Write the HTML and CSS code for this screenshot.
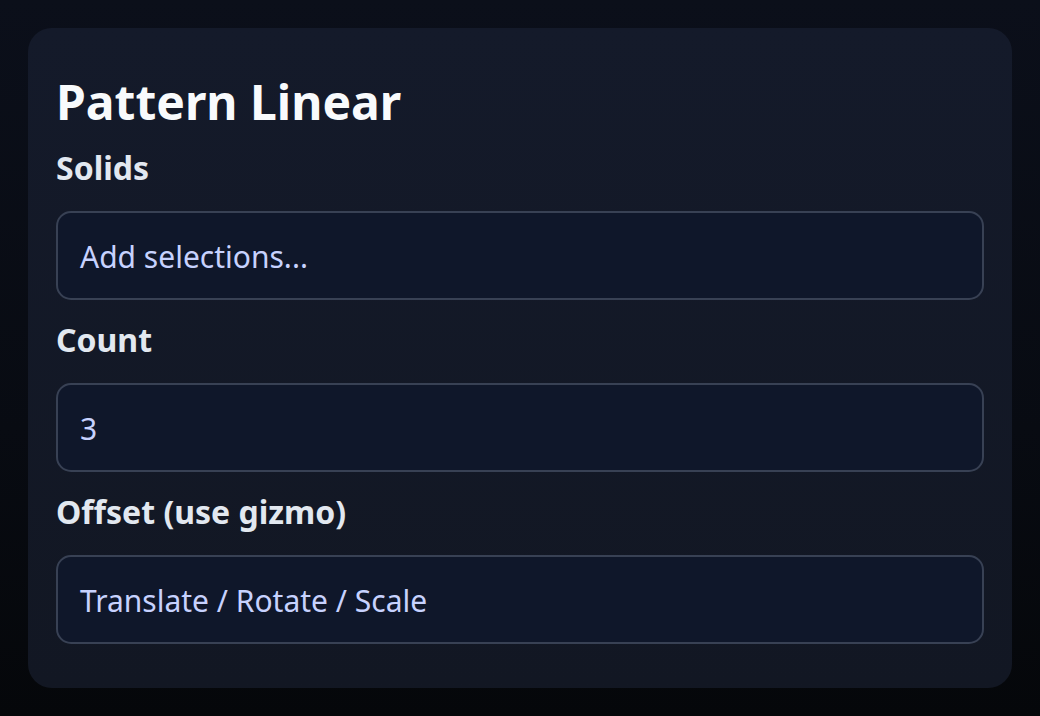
FILE: index.html
```html
<!DOCTYPE html>
<html lang="en">
<head>
<meta charset="utf-8">
<title>Pattern Linear</title>
<link rel="stylesheet" href="styles.css">
</head>
<body>
<main class="card">
  <h1 class="title">Pattern Linear</h1>
  <div class="fields">
    <div class="field">
      <label class="label">Solids</label>
      <div class="input">Add selections...</div>
    </div>
    <div class="field">
      <label class="label">Count</label>
      <div class="input">3</div>
    </div>
    <div class="field">
      <label class="label">Offset (use gizmo)</label>
      <div class="input">Translate / Rotate / Scale</div>
    </div>
  </div>
</main>
</body>
</html>
```

FILE: styles.css
```css
html, body {
  margin: 0;
  height: 100%;
}
body {
  background: linear-gradient(180deg, #0b0f1a 0%, #080b12 60%, #05070a 100%);
  font-family: "Noto Sans", "Open Sans", sans-serif;
  padding: 28px;
  box-sizing: border-box;
}
.card {
  box-sizing: border-box;
  width: 984px;
  height: 660px;
  border-radius: 24px;
  background: linear-gradient(180deg, #141a2a 0%, #121723 100%);
  padding: 45px 28px 44px;
  display: flex;
  flex-direction: column;
}
.title {
  margin: 0 0 17px;
  font-size: 48px;
  line-height: 58px;
  font-weight: 700;
  color: #f8fafc;
}
.fields {
  display: flex;
  flex-direction: column;
  gap: 20px;
}
.field {
  display: flex;
  flex-direction: column;
  gap: 23px;
}
.label {
  font-size: 32px;
  line-height: 40px;
  font-weight: 700;
  color: #e2e8f0;
}
.input {
  box-sizing: border-box;
  height: 89px;
  border: 2px solid #384154;
  border-radius: 15px;
  background: #0f172a;
  padding: 2px 22px 0;
  display: flex;
  align-items: center;
  font-size: 30px;
  color: #c7d2fe;
}
```
